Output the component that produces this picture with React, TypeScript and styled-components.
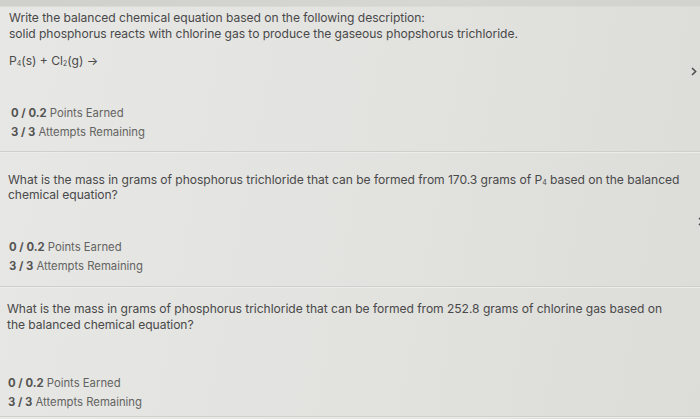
import React from "react";
import styled, { createGlobalStyle } from "styled-components";

const Global = createGlobalStyle`
  html, body { margin: 0; padding: 0; }
  body {
    width: 700px;
    height: 419px;
    overflow: hidden;
    font-family: Inter, "Liberation Sans", sans-serif;
    background: linear-gradient(100deg, #e7e7e5 0%, #e2e2df 55%, #dcdcd9 100%);
  }
`;

const Page = styled.div`
  width: 700px;
  height: 419px;
  display: flex;
  flex-direction: column;
`;

const TopStrip = styled.div`
  height: 6px;
  background: linear-gradient(90deg, #cfcfcc, #d6d6d3 60%, #d2d2cf);
  border-bottom: 1px solid #dadad7;
  flex: none;
`;

const Section = styled.section<{ $pt: number; $pb: number; $pr: number; $pl: number }>`
  display: flex;
  align-items: center;
  padding: ${(p) => p.$pt}px ${(p) => p.$pr}px ${(p) => p.$pb}px ${(p) => p.$pl}px;
  border-bottom: 1px solid #cfcfcc;
  box-shadow: 0 1px 0 #ececea;
  flex: none;
`;

const Body = styled.div`
  flex: 1;
  display: flex;
  flex-direction: column;
`;

const Question = styled.p<{ $lh: number }>`
  margin: 0;
  font-size: 12.1px;
  line-height: ${(p) => p.$lh}px;
  color: #494949;
  letter-spacing: -0.05px;
`;

const Equation = styled.p`
  margin: 11px 0 0 0;
  font-size: 12.1px;
  line-height: 16px;
  color: #4b4b4b;
`;

const Sub = styled.sub`
  font-size: 7px;
  vertical-align: -1px;
  line-height: 0;
`;

const Stats = styled.div<{ $mt: number; $indent: number }>`
  margin-top: ${(p) => p.$mt}px;
  padding-left: ${(p) => p.$indent}px;
  display: flex;
  flex-direction: column;
`;

const StatLine = styled.div`
  font-size: 11.3px;
  line-height: 19px;
  color: #636361;
`;

const StatNum = styled.b`
  font-weight: 700;
  color: #545452;
`;

const Chevron = styled.svg<{ $dy: number; $mr: number }>`
  flex: none;
  width: 6px;
  height: 9px;
  margin-right: ${(p) => p.$mr}px;
  transform: translateY(${(p) => p.$dy}px);
`;

const Arrow = ({ dy, mr }: { dy: number; mr: number }) => (
  <Chevron viewBox="0 0 6 9" $dy={dy} $mr={mr}>
    <path d="M1 1 L4.6 4.5 L1 8" fill="none" stroke="#505050" strokeWidth="1.6" />
  </Chevron>
);

const Stat = ({ a, b, label }: { a: string; b: string; label: string }) => (
  <StatLine>
    <StatNum>
      {a} / {b}
    </StatNum>{" "}
    {label}
  </StatLine>
);

const Stats2 = ({ mt, indent }: { mt: number; indent: number }) => (
  <Stats $mt={mt} $indent={indent}>
    <Stat a="0" b="0.2" label="Points Earned" />
    <Stat a="3" b="3" label="Attempts Remaining" />
  </Stats>
);

export default function App() {
  return (
    <Page>
      <Global />
      <TopStrip />
      <Section $pt={3} $pb={9} $pr={2} $pl={9}>
        <Body>
          <Question $lh={16}>
            Write the balanced chemical equation based on the following description:
            <br />
            solid phosphorus reacts with chlorine gas to produce the gaseous phopshorus trichloride.
          </Question>
          <Equation>
            P<Sub>4</Sub>(s) + Cl<Sub>2</Sub>(g) →
          </Equation>
          <Stats2 mt={35} indent={2} />
        </Body>
        <Arrow dy={-5} mr={1} />
      </Section>
      <Section $pt={20} $pb={10} $pr={0} $pl={8}>
        <Body>
          <Question $lh={15}>
            What is the mass in grams of phosphorus trichloride that can be formed from 170.3 grams of P
            <Sub>4</Sub> based on the balanced
            <br />
            chemical equation?
          </Question>
          <Stats2 mt={36} indent={1} />
        </Body>
        <Arrow dy={-3} mr={-4} />
      </Section>
      <Section $pt={14} $pb={4} $pr={0} $pl={7}>
        <Body>
          <Question $lh={16}>
            What is the mass in grams of phosphorus trichloride that can be formed from 252.8 grams of chlorine gas based on
            <br />
            the balanced chemical equation?
          </Question>
          <Stats2 mt={41} indent={1} />
        </Body>
      </Section>
    </Page>
  );
}
